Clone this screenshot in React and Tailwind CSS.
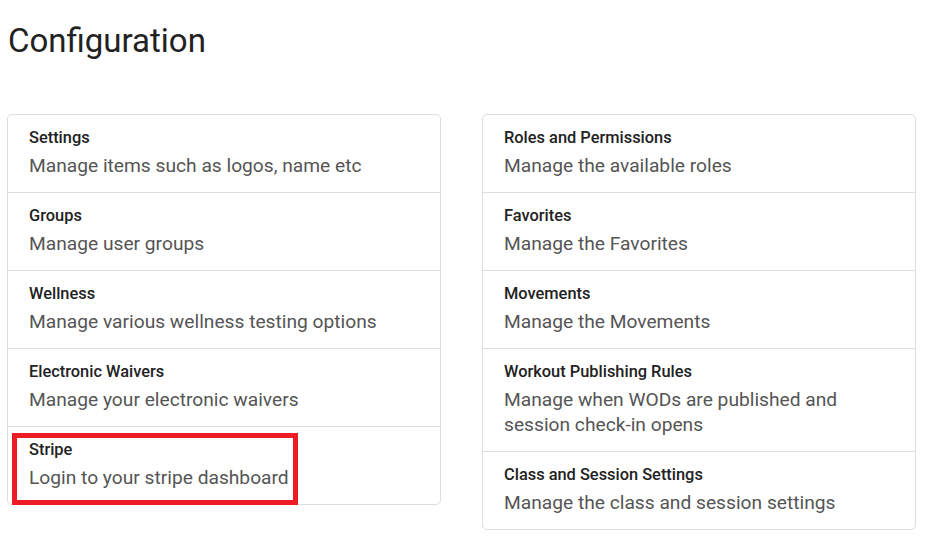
const left = [
  { title: "Settings", sub: "Manage items such as logos, name etc" },
  { title: "Groups", sub: "Manage user groups" },
  { title: "Wellness", sub: "Manage various wellness testing options" },
  { title: "Electronic Waivers", sub: "Manage your electronic waivers" },
  { title: "Stripe", sub: "Login to your stripe dashboard", marked: true },
];

const right = [
  { title: "Roles and Permissions", sub: "Manage the available roles" },
  { title: "Favorites", sub: "Manage the Favorites" },
  { title: "Movements", sub: "Manage the Movements" },
  { title: "Workout Publishing Rules", sub: "Manage when WODs are published and session check-in opens" },
  { title: "Class and Session Settings", sub: "Manage the class and session settings" },
];

function Item({ title, sub, marked }) {
  return (
    <div className="relative px-[21px] pt-3 pb-[14px] border-t border-[#dedede] first:border-t-0">
      <div className="text-[16.4px] leading-[22px] font-medium text-[#222]">{title}</div>
      <div className="mt-[4px] text-[19.2px] leading-[25px] text-[#555] max-w-[370px]">{sub}</div>
      {marked && (
        <div className="absolute left-[4px] top-[6px] w-[286px] h-[72px] border-[5px] border-[#ed1c24] pointer-events-none" />
      )}
    </div>
  );
}

function Card({ items }) {
  return (
    <div className="w-[434px] self-start border border-[#dedede] rounded-[5px] bg-white">
      {items.map((it) => <Item key={it.title} {...it} />)}
    </div>
  );
}

export default function App() {
  return (
    <div className="min-h-[541px] bg-white pl-[7px] pt-[22px] font-['Roboto',sans-serif]">
      <h1 className="pl-px text-[33px] leading-[38px] font-normal text-[#222]">Configuration</h1>
      <div className="mt-[54px] flex gap-[41px]">
        <Card items={left} />
        <Card items={right} />
      </div>
    </div>
  );
}
